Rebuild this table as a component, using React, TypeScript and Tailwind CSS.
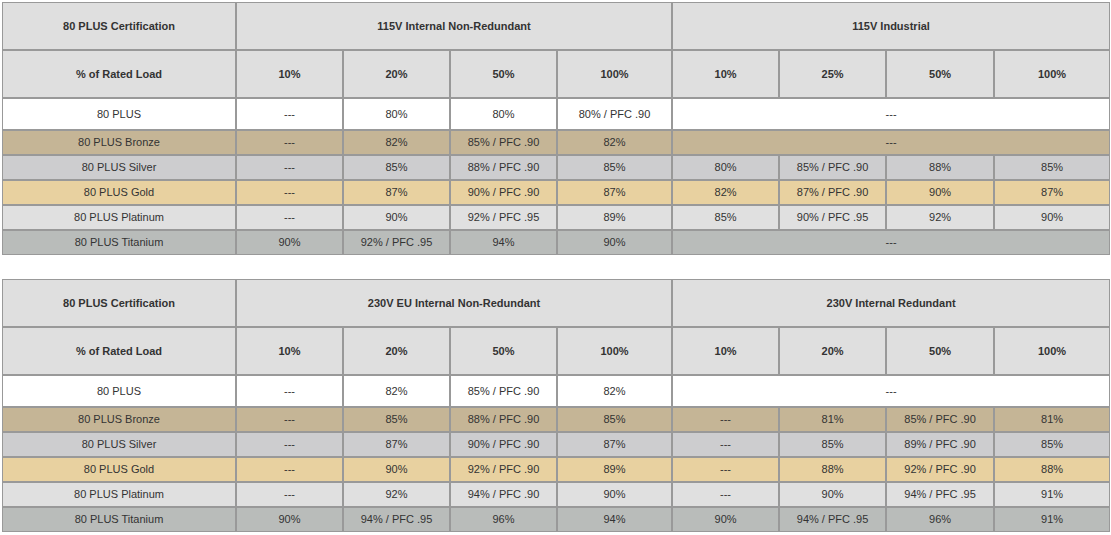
const colWidths = [234, 107, 107, 107, 115, 107, 107, 108, 116];

type Row = { label: string; bg: string; h: string; cells: (string | { span: number; text: string })[] };

const tables: { left: string; right: string; loadsLeft: string[]; loadsRight: string[]; rows: Row[] }[] = [
  {
    left: "115V Internal Non-Redundant",
    right: "115V Industrial",
    loadsLeft: ["10%", "20%", "50%", "100%"],
    loadsRight: ["10%", "25%", "50%", "100%"],
    rows: [
      { label: "80 PLUS", bg: "bg-white", h: "h-[32px]", cells: ["---", "80%", "80%", "80% / PFC .90", { span: 4, text: "---" }] },
      { label: "80 PLUS Bronze", bg: "bg-[#c5b596]", h: "h-[25px]", cells: ["---", "82%", "85% / PFC .90", "82%", { span: 4, text: "---" }] },
      { label: "80 PLUS Silver", bg: "bg-[#cdcdcf]", h: "h-[25px]", cells: ["---", "85%", "88% / PFC .90", "85%", "80%", "85% / PFC .90", "88%", "85%"] },
      { label: "80 PLUS Gold", bg: "bg-[#e8d1a0]", h: "h-[25px]", cells: ["---", "87%", "90% / PFC .90", "87%", "82%", "87% / PFC .90", "90%", "87%"] },
      { label: "80 PLUS Platinum", bg: "bg-[#e0e0e0]", h: "h-[25px]", cells: ["---", "90%", "92% / PFC .95", "89%", "85%", "90% / PFC .95", "92%", "90%"] },
      { label: "80 PLUS Titanium", bg: "bg-[#b9bcba]", h: "h-[25px]", cells: ["90%", "92% / PFC .95", "94%", "90%", { span: 4, text: "---" }] },
    ],
  },
  {
    left: "230V EU Internal Non-Redundant",
    right: "230V Internal Redundant",
    loadsLeft: ["10%", "20%", "50%", "100%"],
    loadsRight: ["10%", "20%", "50%", "100%"],
    rows: [
      { label: "80 PLUS", bg: "bg-white", h: "h-[32px]", cells: ["---", "82%", "85% / PFC .90", "82%", { span: 4, text: "---" }] },
      { label: "80 PLUS Bronze", bg: "bg-[#c5b596]", h: "h-[25px]", cells: ["---", "85%", "88% / PFC .90", "85%", "---", "81%", "85% / PFC .90", "81%"] },
      { label: "80 PLUS Silver", bg: "bg-[#cdcdcf]", h: "h-[25px]", cells: ["---", "87%", "90% / PFC .90", "87%", "---", "85%", "89% / PFC .90", "85%"] },
      { label: "80 PLUS Gold", bg: "bg-[#e8d1a0]", h: "h-[25px]", cells: ["---", "90%", "92% / PFC .90", "89%", "---", "88%", "92% / PFC .90", "88%"] },
      { label: "80 PLUS Platinum", bg: "bg-[#e0e0e0]", h: "h-[25px]", cells: ["---", "92%", "94% / PFC .90", "90%", "---", "90%", "94% / PFC .95", "91%"] },
      { label: "80 PLUS Titanium", bg: "bg-[#b9bcba]", h: "h-[25px]", cells: ["90%", "94% / PFC .95", "96%", "94%", "90%", "94% / PFC .95", "96%", "91%"] },
    ],
  },
];

const cell = "border border-[#999999] p-0 text-center align-middle";

function EfficiencyTable({ t }: { t: (typeof tables)[number] }) {
  return (
    <table className="w-[1108px] table-fixed border-separate border-spacing-0 text-[11px] text-[#333333]">
      <colgroup>
        {colWidths.map((w, i) => (
          <col key={i} style={{ width: w }} />
        ))}
      </colgroup>
      <thead>
        <tr className="h-[48px] bg-[#dfdfdf] font-bold">
          <th className={cell}>80 PLUS Certification</th>
          <th className={cell} colSpan={4}>{t.left}</th>
          <th className={cell} colSpan={4}>{t.right}</th>
        </tr>
        <tr className="h-[48px] bg-[#dfdfdf] font-bold">
          <th className={cell}>% of Rated Load</th>
          {[...t.loadsLeft, ...t.loadsRight].map((l, i) => (
            <th key={i} className={cell}>{l}</th>
          ))}
        </tr>
      </thead>
      <tbody>
        {t.rows.map((r) => (
          <tr key={r.label} className={`${r.bg} ${r.h}`}>
            <td className={cell}>{r.label}</td>
            {r.cells.map((c, i) =>
              typeof c === "string" ? (
                <td key={i} className={cell}>{c}</td>
              ) : (
                <td key={i} className={cell} colSpan={c.span}>{c.text}</td>
              )
            )}
          </tr>
        ))}
      </tbody>
    </table>
  );
}

export default function App() {
  return (
    <div className="bg-white min-h-[535px] pl-[2px] pt-[2px] font-['Liberation_Sans',Arial,sans-serif]">
      <div className="flex flex-col gap-[24px]">
        {tables.map((t, i) => (
          <EfficiencyTable key={i} t={t} />
        ))}
      </div>
    </div>
  );
}
